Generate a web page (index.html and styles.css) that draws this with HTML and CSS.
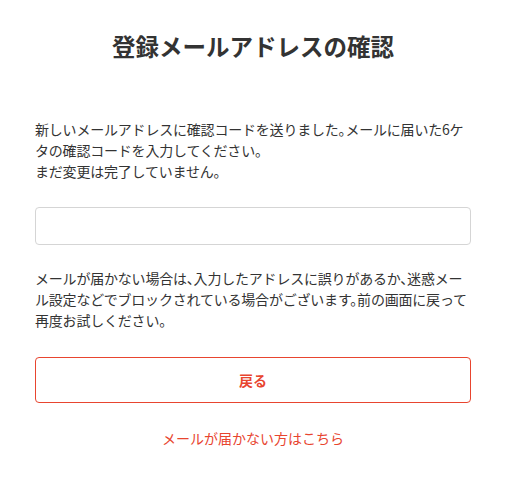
FILE: index.html
```html
<!DOCTYPE html>
<html lang="ja">
<head>
    <meta charset="utf-8">
    <title>登録メールアドレスの確認</title>
    <link rel="stylesheet" href="styles.css">
</head>
<body>
    <div class="container">
        <h1 class="title">登録メールアドレスの確認</h1>
        <p class="message">新しいメールアドレスに確認コードを送りました。メールに届いた6ケタの確認コードを入力してください。<br>まだ変更は完了していません。</p>
        <input class="code-input" type="text" inputmode="numeric" maxlength="6">
        <p class="message notice">メールが届かない場合は、入力したアドレスに誤りがあるか、迷惑メール設定などでブロックされている場合がございます。前の画面に戻って再度お試しください。</p>
        <button class="back-button" type="button">戻る</button>
        <a class="help-link" href="#">メールが届かない方はこちら</a>
    </div>
</body>
</html>
```

FILE: styles.css
```css
body {
    margin: 0;
    background: #fff;
    color: #333;
    font-family: "Noto Sans CJK JP", "Noto Sans", sans-serif;
}

.container {
    display: flex;
    flex-direction: column;
    padding: 28px 35px 0;
}

.title {
    margin: 0;
    font-size: 23.5px;
    line-height: 36px;
    font-weight: bold;
    text-align: center;
}

/* 句読点は半角幅で詰める */
.message {
    margin: 55px 0 0;
    font-size: 14px;
    line-height: 21px;
    letter-spacing: -0.2px;
    font-feature-settings: "halt";
}

.code-input {
    box-sizing: border-box;
    height: 38px;
    margin-top: 25px;
    border: 1px solid #d5d5d5;
    border-radius: 4px;
    font-size: 16px;
    padding: 0 10px;
}

.notice {
    margin-top: 23px;
}

.back-button {
    box-sizing: border-box;
    height: 46px;
    margin-top: 26px;
    background: #fff;
    border: 1px solid #e8452f;
    border-radius: 4px;
    color: #e8452f;
    font-family: inherit;
    font-size: 14px;
    font-weight: bold;
    cursor: pointer;
}

.help-link {
    margin-top: 25px;
    font-size: 14px;
    line-height: 21px;
    color: #e8452f;
    text-align: center;
    text-decoration: none;
}
```
